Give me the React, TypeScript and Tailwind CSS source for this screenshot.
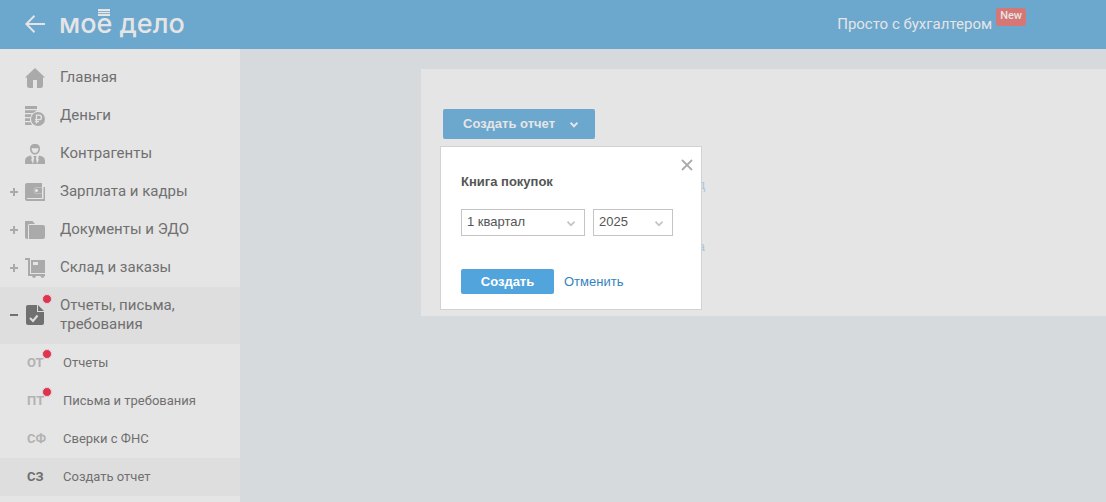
import type { ReactNode } from "react";

const HomeIcon = () => (
  <svg width="20" height="20" viewBox="0 0 20 20" fill="currentColor" aria-hidden="true">
    <path d="M10 0 20 9.5H18V17.5Q18 20 15.5 20H12V12H8V20H4.5Q2 20 2 17.5V9.5H0Z" />
  </svg>
);

const MoneyIcon = () => (
  <svg width="20" height="20" viewBox="0 0 20 20" fill="currentColor" aria-hidden="true">
    <path d="M0 0H12V3H0ZM0 4.2H12L8 7H0ZM0 8.2H6.5L5.5 11H0ZM0 12.2H5V15H0ZM0 16.2H5.5L7 19H0Z" />
    <circle cx="13" cy="13" r="7" />
    <path d="M11.5 17.5V9.2H14.2A2.2 2.2 0 0 1 14.2 13.600H10M10 15.600H14" fill="none" stroke="#e5e5e5" strokeWidth="1.300" />
  </svg>
);

const PersonIcon = () => (
  <svg width="20" height="20" viewBox="0 0 20 20" fill="currentColor" aria-hidden="true">
    <path fillRule="evenodd" d="M10 0C13.500 0 15 2 15 4.500C15 8 13 10.500 10 10.500S5 8 5 4.500C5 2 6.500 0 10 0ZM6.700 4V5C6.700 7 8 9 10 9S13.300 7 13.300 5V4Q10 4.700 6.700 4Z" />
    <path d="M6 11.500Q0 12.500 0 16.500V20H8L6 15.500L7 15ZM14 11.500Q20 12.500 20 16.500V20H12L14 15.500L13 15ZM8.300 12H11.700L10.900 14L12 20H8L9.100 14Z" />
  </svg>
);

const WalletIcon = () => (
  <svg width="20" height="18" viewBox="0 0 20 18" fill="currentColor" aria-hidden="true">
    <path d="M2 0H17V15H2V16H18.500V4H20V18H2Q0 18 0 16V2Q0 0 2 0Z" />
    <path d="M17 4.500H11Q9 4.500 9 7.500T11 10.500H17" fill="none" stroke="#e5e5e5" strokeWidth="0.800" opacity="0.450" />
    <circle cx="11.500" cy="7.500" r="1.600" fill="#e5e5e5" />
  </svg>
);

const FolderIcon = () => (
  <svg width="20" height="18" viewBox="0 0 20 18" fill="currentColor" aria-hidden="true">
    <path d="M0 0H7.500L10 3H4Q3 3 3 5V18H2Q0 18 0 16Z" />
    <path d="M4 4H18Q20 4 20 6V16Q20 18 18 18H4Z" />
  </svg>
);

const CartIcon = () => (
  <svg width="20" height="20" viewBox="0 0 20 20" fill="currentColor" aria-hidden="true">
    <path d="M0 0H5V16H20V18H3V2H0Z" />
    <path fillRule="evenodd" d="M6 2H20V15H6ZM8 4V7H13V4Z" />
    <circle cx="9" cy="18.300" r="1.700" />
    <circle cx="17.500" cy="18.300" r="1.700" />
  </svg>
);

const ReportIcon = () => (
  <svg width="18" height="20" viewBox="0 0 18 20" fill="currentColor" aria-hidden="true">
    <path d="M2 0H11V7H18V18Q18 20 16 20H2Q0 20 0 18V2Q0 0 2 0ZM12 0 18 6H12Z" />
    <path d="M4 13 7 16 11.500 10.500" fill="none" stroke="#dedede" strokeWidth="2" />
  </svg>
);

const Chevron = ({ className }: { className: string }) => (
  <svg width="8" height="6" viewBox="0 0 8 6" fill="none" stroke="currentColor" className={className} aria-hidden="true">
    <path d="M0.500 0.700 4 4.300 7.500 0.700" />
  </svg>
);

const Dot = ({ className }: { className: string }) => (
  <span className={`absolute left-[15px] size-[10px] rounded-full border border-[#dcd3da] bg-[#e0334d] ${className}`} />
);

type Item = { label: string; icon: ReactNode; sign?: string };

const items: Item[] = [
  { label: "Главная", icon: <HomeIcon /> },
  { label: "Деньги", icon: <MoneyIcon /> },
  { label: "Контрагенты", icon: <PersonIcon /> },
  { label: "Зарплата и кадры", icon: <WalletIcon />, sign: "plus" },
  { label: "Документы и ЭДО", icon: <FolderIcon />, sign: "plus" },
  { label: "Склад и заказы", icon: <CartIcon />, sign: "plus" },
];

const subItems = [
  { code: "ОТ", label: "Отчеты", dot: true },
  { code: "ПТ", label: "Письма и требования", dot: true },
  { code: "СФ", label: "Сверки с ФНС" },
  { code: "СЗ", label: "Создать отчет", active: true },
];

const Sign = ({ kind }: { kind?: string }) => (
  <svg width="8" height="8" viewBox="0 0 8 8" stroke="currentColor" strokeWidth="2" className="shrink-0" aria-hidden="true">
    {kind && <path d="M0 4H8" />}
    {kind === "plus" && <path d="M4 0V8" />}
  </svg>
);

function Sidebar() {
  return (
    <nav className="w-60 shrink-0 bg-[#e5e5e5] pt-[10px] text-[15px] leading-[19px] text-[#707070]">
      {items.map((item) => (
        <a key={item.label} href="#" className="flex h-[38px] items-center pl-[10px]">
          <span className="flex items-center text-[#aaaaaa]">
            <Sign kind={item.sign} />
            <span className="ml-[7px] w-5">{item.icon}</span>
          </span>
          <span className="ml-[15px] pb-[2px]">{item.label}</span>
        </a>
      ))}
      <a href="#" className="flex h-[57px] items-center bg-[#dedede] pb-[2px] pl-[10px]">
        <Sign kind="minus" />
        <span className="relative ml-[7px] flex w-5 justify-center">
          <ReportIcon />
          <Dot className="-top-[11px] ml-[2px]" />
        </span>
        <span className="ml-[15px] w-36">Отчеты, письма, требования</span>
      </a>
      {subItems.map((item) => (
        <a
          key={item.code}
          href="#"
          className={`flex h-[38px] items-center pb-[2px] pl-[27px] text-[13px] ${item.active ? "bg-[#dedede]" : ""}`}
        >
          <span className={`relative w-9 font-bold ${item.active ? "text-[#6e6e6e]" : "text-[#b2b2b2]"}`}>
            {item.code}
            {item.dot && <Dot className="-top-1" />}
          </span>
          {item.label}
        </a>
      ))}
    </nav>
  );
}

const selectClass =
  "h-[27px] appearance-none border border-[#c4c4c4] bg-white px-[5px] pb-[2px] text-[13px] text-[#555555]";

function Dialog() {
  return (
    <form
      role="dialog"
      aria-labelledby="dialog-title"
      className="absolute top-full -left-[3px] z-10 mt-[7px] w-[262px] border border-[#d2d2d2] bg-white px-[20px] pt-[25px] pb-[15px]"
    >
      <button type="button" aria-label="Закрыть" className="absolute top-3 right-2 text-[#ababab]">
        <svg width="12" height="12" viewBox="0 0 12 12" fill="none" stroke="currentColor" strokeWidth="1.800">
          <path d="M1 1 11 11M11 1 1 11" />
        </svg>
      </button>
      <h2 id="dialog-title" className="text-[13px] leading-5 font-bold text-[#555555]">Книга покупок</h2>
      <div className="mt-[17px] flex gap-2">
        <span className="relative flex">
          <select aria-label="Квартал" className={`w-[124px] ${selectClass}`}>
            <option>1 квартал</option>
          </select>
          <Chevron className="pointer-events-none absolute top-3 right-[10px] stroke-[1.7] text-[#c4c4c4]" />
        </span>
        <span className="relative flex">
          <select aria-label="Год" className={`w-20 ${selectClass}`}>
            <option>2025</option>
          </select>
          <Chevron className="pointer-events-none absolute top-3 right-[10px] stroke-[1.7] text-[#c4c4c4]" />
        </span>
      </div>
      <div className="mt-[33px] flex items-center gap-[10px] text-[13px]">
        <button type="submit" className="h-[25px] w-[93px] rounded-[2px] bg-[#52a4dc] font-bold text-white">Создать</button>
        <a href="#" className="text-[#3583be]">Отменить</a>
      </div>
    </form>
  );
}

export default function App() {
  return (
    <div className="flex min-h-screen flex-col overflow-hidden bg-[#d6dadd] font-['Roboto',sans-serif]">
      <header className="flex h-[49px] items-center bg-[#6ca7ce] text-[#e5e5e5]">
        <a href="#" aria-label="Назад" className="ml-[25px] pb-[2px]">
          <svg width="20" height="18" viewBox="0 0 20 18" fill="none" stroke="currentColor" strokeWidth="2">
            <path d="M20 9H1.500M9.500 0.800 1.300 9 9.500 17.200" />
          </svg>
        </a>
        <a href="#" className="ml-[14px] pb-[2px] font-['Inter',sans-serif] text-[27px] leading-8 font-medium">
          мо
          <span className="relative">
            е
            <svg width="12" height="7" viewBox="0 0 12 7" fill="currentColor" className="absolute top-[2px] left-[2px]" aria-hidden="true">
              <path d="M0 0H12V2H0ZM0 2.700H12V4.300H0ZM0 5H12V7H0Z" />
            </svg>
          </span>{" "}
          дело
        </a>
        <a href="#" className="mr-20 ml-auto flex items-center text-[15px]">
          Просто с бухгалтером
          <span className="mb-4 ml-1 flex h-[18px] items-center rounded-[3px] bg-[#d67675] px-1 text-[11px] font-medium">New</span>
        </a>
      </header>
      <div className="flex flex-1">
        <Sidebar />
        <main className="min-w-0 flex-1 pt-5 pl-[181px] font-['Liberation_Sans',sans-serif]">
          <section className="h-[247px] bg-[#e5e5e5] px-[22px] pt-10">
            <div className="relative inline-block">
              <button type="button" className="flex h-[30px] w-[152px] items-center rounded-[2px] bg-[#6ca7ce] pl-5 text-[13px] font-bold text-[#e5e5e5]">
                Создать отчет
                <Chevron className="mt-[2px] ml-[15px] stroke-2" />
              </button>
              <Dialog />
            </div>
            <div className="mt-[38px] flex w-[262px] flex-col items-end gap-[46px] text-[13px] leading-4 text-[#a8c8dc]">
              <a href="#">д</a>
              <a href="#">а</a>
            </div>
          </section>
        </main>
      </div>
    </div>
  );
}
